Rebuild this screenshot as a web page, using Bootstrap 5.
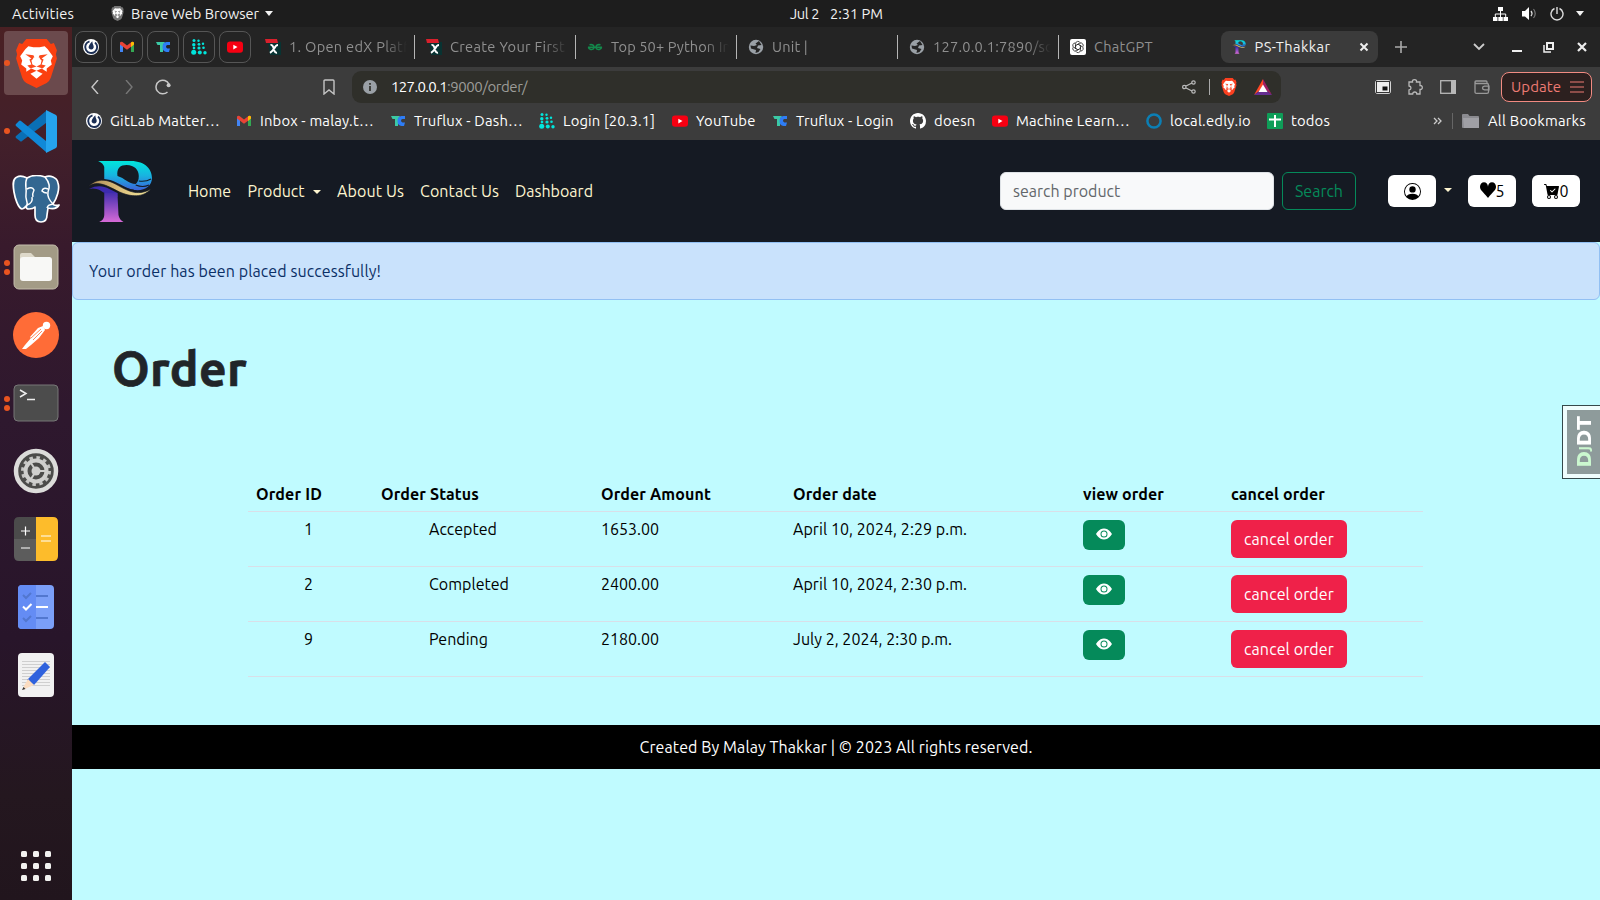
<!DOCTYPE html>
<html lang="en">
<head>
<meta charset="utf-8">
<title>PS-Thakkar</title>
<link href="https://cdn.jsdelivr.net/npm/bootstrap@5.3.0/dist/css/bootstrap.min.css" rel="stylesheet">
<style>
:root{--ui:Ubuntu,"Noto Sans","Open Sans",sans-serif}
html,body{height:900px;overflow:hidden}
body{font-family:var(--ui);background:#1d1d1d;color:#fff;font-size:16px}
svg{display:block;flex:none}
[data-w]{display:inline-block;white-space:nowrap}
.gbar{height:27px;font-size:14.6px;line-height:27px;color:#f2f2f2;display:grid;grid-template-columns:790px 1fr auto;background:#1d1d1d}
.gbar .caret{border-width:5px 5px 0}
.dock{width:72px;background:linear-gradient(180deg,#4a2023 0%,#43202a 12%,#381a2c 25%,#2e182e 45%,#28152a 70%,#24171f 88%,#21151d 100%)}
.dslot{height:68px;width:72px;position:relative;display:flex;align-items:center;justify-content:center}
.tile{width:64px;height:64px;border-radius:4px;background:#6b4a4d;display:flex;align-items:center;justify-content:center}
.dots{position:absolute;left:4px;top:0;height:68px;display:flex;flex-direction:column;justify-content:center;gap:3px}
.dots i{width:6px;height:6px;border-radius:50%;background:#e95420}
.tabs{height:40px;background:#242424;padding:4px 0 4px 3px;color:#8f8f8f;font-size:14.6px}
.pin{width:32px;height:32px;border:1px solid #565656;border-radius:8px;margin-right:4px;display:flex;align-items:center;justify-content:center}
.tabx{width:161px;height:32px;padding-left:12px;position:relative}
.tabx.sep{border-right:1px solid transparent}
.tabx.sep::after{content:"";position:absolute;right:-2px;top:4px;height:24px;width:1px;background:#b5b5b5}
.tabx svg{margin-right:8px}
.fadeout{width:122px;overflow:hidden;-webkit-mask-image:linear-gradient(90deg,#000 94px,transparent 118px)}
.tabon{width:157px;height:32px;border-radius:8px;background:#3b3b3b;color:#f1f1f1;padding-left:11px;margin-left:1.5px}
.tools{height:40px;background:#3c3c3c;color:#fff;font-size:15px}
.omni{width:929px;height:32px;border-radius:9px;background:#2f2f2a}
.marks{height:33px;background:#3c3c3c;font-size:14.8px;padding-left:14px;padding-bottom:5px}
.bm{gap:8px;flex:none}
.upd{width:91px;height:30px;border:1px solid #f28b82;border-radius:8px;background:#2c201f;color:#ee7b74;padding-left:9px;gap:9px}
.page{background:#c0fbff;color:#000;height:760px;position:relative;overflow:hidden}
.shop{height:102px;background:#151a23;padding:0 20px 0 16px}
.shop .nav-link{color:#fdf5d0;padding:0;line-height:24px}
.caret{display:inline-block;border-top:4.5px solid;border-left:4.5px solid transparent!important;border-right:4.5px solid transparent!important}
.shop .form-control{width:274px;height:38px;background:#f8f9fa;border-color:#dee2e6;font-family:var(--ui)}
.shop .form-control::placeholder{color:#62666a}
.btn-outline-success{--bs-btn-color:#058a5a;--bs-btn-border-color:#058a5a}
.white{width:48px;height:32px;border-radius:6px;background:#fff;color:#000}
.note{height:58px;background:#c9e2fc;border:1px solid #92c0f3;color:#0b3067;border-radius:6px;margin:0;padding:16px}
h1.ttl{font-size:48px;font-weight:700;line-height:58px;color:#212529;margin:39px 0 0 40px;-webkit-text-stroke:.7px #212529}
.otable{width:1175px;margin:73px 0 0 176px;table-layout:fixed;--bs-table-bg:transparent;--bs-table-color:#000}
.otable td,.otable th{height:41px;line-height:18px;padding:8px;border-color:#d9dfe8}
.otable th{vertical-align:bottom}
.otable td.ind{padding-left:56px}
.vbtn{width:42px;height:30px;background:#058a5a;border-radius:6px;display:flex;align-items:center;justify-content:center;padding-bottom:1px}
.cbtn,.cbtn:hover{width:116px;height:38px;background:#ef2149;color:#fff;border:0;border-radius:6px;padding:0;line-height:38px}
.foot{height:44px;background:#000;color:#fff;line-height:44px;margin-top:48px;text-align:center}
.djdt{position:absolute;right:-1px;top:265px;width:39px;height:74px;border:1px solid #35494b;background:#effdfd;padding:4px 0 4px 4px}
.djdt div{height:64px;background:#8e9b9b;display:flex;align-items:center;justify-content:center;font:700 20px/20px "DejaVu Sans",sans-serif;color:#fff}
.djdt span{writing-mode:vertical-rl;transform:rotate(180deg);white-space:nowrap;margin-right:-1px}
.djdt b{color:#cbf7cf}.djdt small{font:700 14px/20px "Open Sans",sans-serif;color:#cbf7cf;margin:0 1px}
</style>
</head>
<body>
<svg width="0" height="0" style="position:absolute">
<defs>
<linearGradient id="gp" x1="0" x2="0" y1="0" y2="1"><stop offset="0" stop-color="#00e6dc"/><stop offset=".5" stop-color="#18b4e0"/><stop offset="1" stop-color="#3b62d8"/></linearGradient>
<linearGradient id="gs" x1="0" x2="0" y1="0" y2="1"><stop offset="0" stop-color="#4630b0"/><stop offset="1" stop-color="#d66ad6"/></linearGradient>
<linearGradient id="gg" x1="0" x2="1"><stop offset="0" stop-color="#a68652"/><stop offset=".5" stop-color="#dcc07c"/><stop offset="1" stop-color="#f3e79c"/></linearGradient>
<symbol id="lion" viewBox="0 0 40 48">
<path fill="currentColor" d="M10 0h20l4 5 3-1 3 7-1 4 1 4-6 19q-1 3-4 5l-10 5-10-5q-3-2-4-5L0 19l1-4-1-4 3-7 3 1z"/>
<path fill="#fff" d="M12 7l5 1h6l5-1 3 3 5 7-2 4 1 4-5 4v3l-5-3-5 2-5-2-5 3v-3l-5-4 1-4-2-4 5-7zM20 31l6 3-6 5-6-5z"/>
<path fill="currentColor" d="M9 15l8 1 1 2-3 3 1 4 4 2 4-2 1-4-3-3 1-2 8-1-6 4 2 1-2 5 4 1-3 3-6-2-6 2-3-3 4-1-2-5 2-1z" opacity=".95"/>
<path fill="#fff" d="M17 18h6l1 6-4 2-4-2z"/>
</symbol>
<symbol id="plogo" viewBox="0 0 64 61">
<path fill="url(#gp)" fill-rule="evenodd" d="M10 0H42C57 0 63 9 63 17c0 8-7 13-17 12-8-1-15-7-24-10l-6-1V6Q15 2 10 0zM29 15c-1-8 3-11 9-11 8 0 12 5 12 11 0 4-1 6-3 8-7 0-11-6-18-8z"/>
<path fill="none" stroke="#151a23" stroke-width="1" d="M62 18q-5 3-12 2M60 24q-6 3-13 0M18 22c8-1 18 7 27 7"/>
<path fill="url(#gg)" stroke="#151a23" stroke-width=".7" d="M0 26c8-9 18-8 27-3 11 6 21 13 35 5-8 9-20 8-31 3C21 26 9 18 0 26z"/>
<path fill="#3d2bb0" d="M1 28c8-4 14-3 20 0l8 4v4H18v-3C13 30 8 26 1 28z"/>
<path fill="url(#gs)" d="M16 32h13l1 22q1 5 5 7H11q5-2 5-7z"/>
</symbol>
<symbol id="mat" viewBox="0 0 16 16"><circle cx="8" cy="8" r="8" fill="#fff"/><path d="M6.500 2.300A6 6 0 1 0 12 3.400" fill="none" stroke="#1c2f55" stroke-width="1.900"/><path d="M9.300 2.200C6.500 5 5.200 7.500 5.700 9a2.700 2.700 0 0 0 5-.6C11 6.500 9.400 5 9.300 2.200z" fill="#1c2f55"/></symbol>
<symbol id="gm" viewBox="0 0 16 16"><path d="M1 3.500v9.500h3V5z" fill="#4285f4"/><path d="M12 5v8h3V3.500z" fill="#34a853"/><path d="M1 5.500V3.700Q2 2 3.500 3L8 6.500 12.500 3Q14 2 15 3.700v1.800L8 10.800z" fill="#ea4335"/><path d="M12 3.400q2-1.600 3 .4v1.700l-3 2.400z" fill="#fbbc04"/></symbol>
<symbol id="tc" viewBox="0 0 16 16"><path d="M1 3h9l-2 3v7H5V6H2.500z" fill="#3bc9a5"/><path d="M15 3v3h-2.500Q11 6 11 7.500T12.500 9.600H15L14 13h-2.500Q7.500 12.500 7.500 8T11.500 3z" fill="#2e7df6"/></symbol>
<symbol id="dt" viewBox="0 0 16 16"><g fill="#00e5dc"><circle cx="3" cy="1.500" r="1.500"/><circle cx="7.500" cy="1.800" r="1.200"/><circle cx="2.800" cy="5.700" r="1.700"/><circle cx="8" cy="5.300" r="1.400"/><circle cx="12" cy="4.700" r="1.200"/><circle cx="3" cy="9" r="1.300"/><circle cx="8" cy="9" r="1.600"/><circle cx="12.500" cy="8.800" r="1.300"/><circle cx="2.700" cy="13.300" r="2.500"/><circle cx="8.800" cy="13.400" r="2"/><circle cx="14" cy="13.700" r="1.700"/></g></symbol>
<symbol id="yt" viewBox="0 0 16 16"><rect y="2.400" width="16" height="11.400" rx="3" fill="#f70012"/><path d="M6.300 5.700v4.800L10.500 8z" fill="#fff"/></symbol>
<symbol id="tx" viewBox="0 0 16 16"><path fill="#083332" d="M3 3h13v13H5z"/><path fill="#d9202c" d="M0 0h12l1 4H1z"/><path d="M5.500 6q2-.5 2.700 2l1.300 4q.6 2 2.500 1.700M13 6Q11 6 9.500 9T5 13.800" fill="none" stroke="#fff" stroke-width="2"/></symbol>
<symbol id="gfg" viewBox="0 0 16 16"><path d="M1 8.300h14M2.500 5.800q4.500-.8 4.500 2.500-.5 2.700-3.300 2.100Q1.500 9.800 1.500 8.300M13.500 5.800Q9 5 9 8.300q.5 2.700 3.300 2.100 2.200-.6 2.200-2.100" fill="none" stroke="#13894b" stroke-width="1.600"/></symbol>
<symbol id="globe" viewBox="0 0 16 16"><circle cx="8" cy="8" r="7.200" fill="#9aa0a6"/><path d="M2.500 6.500l3.500.5 3-1-1.500-1.500L11 2l2.500 4-3.500.5-1 2.500 3.500 1-2 3-3 1 .5-3L3 9.500z" fill="#242424"/></symbol>
<symbol id="gh" viewBox="0 0 16 16"><path fill="#fff" d="M8 0C3.580 0 0 3.580 0 8c0 3.540 2.290 6.530 5.470 7.590.4.070.55-.17.55-.38 0-.19-.01-.82-.01-1.490-2.010.37-2.530-.49-2.690-.94-.09-.23-.48-.94-.82-1.130-.28-.15-.68-.52-.01-.53.63-.01 1.080.58 1.230.82.72 1.210 1.870.87 2.330.66.07-.52.28-.87.51-1.070-1.780-.2-3.640-.89-3.640-3.950 0-.87.31-1.590.82-2.150-.08-.2-.36-1.020.08-2.120 0 0 .67-.21 2.200.82.64-.18 1.320-.27 2-.27s1.360.09 2 .27c1.530-1.040 2.200-.82 2.200-.82.44 1.100.16 1.920.08 2.120.51.56.82 1.270.82 2.150 0 3.070-1.870 3.750-3.650 3.950.29.25.54.73.54 1.480 0 1.070-.01 1.930-.01 2.200 0 .21.15.46.55.38A8.010 8.010 0 0 0 16 8c0-4.420-3.580-8-8-8"/></symbol>
<symbol id="eye" viewBox="0 0 16 16"><path fill="#fff" d="M10.500 8a2.500 2.500 0 1 1-5 0 2.500 2.500 0 0 1 5 0"/><path fill="#fff" d="M0 8s3-5.500 8-5.500S16 8 16 8s-3 5.500-8 5.500S0 8 0 8m8 3.500a3.500 3.500 0 1 0 0-7 3.500 3.500 0 0 0 0 7"/></symbol>
</defs>
</svg>

<div class="gbar">
  <div class="d-flex align-items-center" style="padding-left:12px">
    <span data-w="62">Activities</span>
    <svg width="13" height="15" viewBox="0 0 40 48" style="margin-left:37px;margin-right:7px;color:#777"><use href="#lion"/></svg>
    <span data-w="128">Brave Web Browser</span><span class="caret" style="margin-left:6px"></span>
  </div>
  <div><span data-w="29">Jul 2</span><span data-w="53" style="margin-left:11px">2:31 PM</span></div>
  <div class="d-flex align-items-center" style="padding-right:16px;gap:14px">
    <svg width="15" height="14" viewBox="0 0 15 14"><path fill="#fff" d="M5 0h5v4H5zM0 10h4.500v4H0zM5.300 10h4.500v4H5.300zM10.500 10H15v4h-4.500z"/><path d="M7.500 4v3M2.300 10V7h10.400v3M7.500 7v3" stroke="#fff" fill="none"/></svg>
    <svg width="14" height="14" viewBox="0 0 14 14"><path fill="#fff" d="M0 4h3l4-4v13L3 9.500H0z"/><path d="M9 4q2 2.500 0 5" stroke="#ddd" fill="none" stroke-width="1.300"/><path d="M11.500 2q3.500 4.500 0 9" stroke="#777" fill="none" stroke-width="1.200"/></svg>
    <svg width="14" height="14" viewBox="0 0 14 14"><path d="M4.500 1.500a6 6 0 1 0 5 0M7 0v7" stroke="#ddd" fill="none" stroke-width="1.400"/></svg>
    <span class="caret" style="margin-left:-2px"></span>
  </div>
</div>

<div class="d-flex" style="height:873px">
<aside class="dock d-flex flex-column" style="padding-top:2px">
  <div class="dslot"><div class="tile"><svg width="41" height="49" color="#fb4010"><use href="#lion"/></svg></div><div class="dots"><i></i></div></div>
  <div class="dslot"><div class="dots"><i></i></div><svg width="43" height="43" viewBox="0 0 43 43"><path fill="#0a6fb5" d="M31 1v12L7 31q-1 1-2 0l-4-3q-1-1 0-2z"/><path fill="#1089d8" d="M6 11l25 20v11L1 16q-1-1 0-2l3-3q1-1 2 0z"/><path fill="#25a4ee" d="M31 0l10 5q1 1 1 2v29q0 1-1 2l-10 5z"/></svg></div>
  <div class="dslot"><svg width="48" height="49" viewBox="0 0 48 49"><path fill="#336791" stroke="#fff" stroke-width="1.700" stroke-linejoin="round" d="M15 3Q9 0 5 2c-5 2-4 9-3 15 1 6 4 16 8 17 2 0 3-2 5-4-2 3 0 4 2 4 3 0 5-1 6-2v8c0 5 2 7 6 7 4 0 6-3 6-7l1-7c4 1 9 1 11-3-3 1-6 0-6-1 4-6 7-15 5-21C45 2 38 0 33 2 27 0 20 0 15 3z"/><path fill="none" stroke="#fff" stroke-width="1.500" d="M15 3c-3 6 0 10-1 16-1 6 2 7 1 11m0 0c3-1 6-3 5-8M15 14q5-3 7 1-2 4-1 7M33 2c5 6 5 11 3 15-1 5 1 8 5 12-4 1-5 1-6 4M36 14q-5-2-6 2 2 2 5 2"/></svg></div>
  <div class="dslot"><div class="dots"><i></i><i></i></div><svg width="46" height="46" viewBox="0 0 46 46"><rect x="1" y="1" width="44" height="44" rx="5" fill="#a39b86" stroke="#c4bdac"/><path d="M7 13V11q0-2 2-2h9l4 4h15v8H7z" fill="#ded9ca"/><rect x="7" y="13" width="32" height="24" rx="3" fill="#f8f8f6"/></svg></div>
  <div class="dslot"><svg width="46" height="46" viewBox="0 0 46 46"><circle cx="23" cy="23" r="23" fill="#ff6c37"/><circle cx="33.500" cy="13.500" r="3.700" fill="#fff"/><path fill="#fff" d="M30 14l2 4-6 8-8 7-5 4H9l3-4 6-7-1-1 8-9z"/><path d="M18 26l10-9M20 28l9-9" stroke="#ff6c37" stroke-width=".8"/></svg></div>
  <div class="dslot"><div class="dots"><i></i><i></i></div><svg width="46" height="38" viewBox="0 0 46 38"><rect x="1" y="1" width="44" height="36" rx="4" fill="#4c4c4c" stroke="#777"/><path d="M7 6l6 3.500L7 13M14 15.500h8" fill="none" stroke="#eee" stroke-width="1.500"/></svg></div>
  <div class="dslot"><svg width="46" height="46" viewBox="0 0 46 46"><circle cx="23" cy="23" r="20" fill="#4c4c4a" stroke="#dcdcda" stroke-width="4.500"/><circle cx="23" cy="23" r="13.500" fill="none" stroke="#c6c6c4" stroke-width="3" stroke-dasharray="3.500 3.570"/><circle cx="23" cy="23" r="10.500" fill="none" stroke="#cfcfcd" stroke-width="4"/><circle cx="23" cy="23" r="4.500" fill="#cfcfcd"/><path d="M23 23h9M23 23l-5-8M23 23l-5 8" stroke="#cfcfcd" stroke-width="2"/></svg></div>
  <div class="dslot"><svg width="46" height="46" viewBox="0 0 46 46"><path d="M6 1h17v22H1V6q0-5 5-5z" fill="#4b4b4b"/><path d="M1 23h22v22H6q-5 0-5-5z" fill="#5c5c5c"/><path d="M23 1h17q5 0 5 5v34q0 5-5 5H23z" fill="#fdbc2b"/><path d="M12.500 10.500v9M8 15h9M8 32h9M28 20h10M28 25h10" stroke="#fff" stroke-width="1.200"/></svg></div>
  <div class="dslot"><svg width="36" height="46" viewBox="0 0 36 46"><rect y="1" width="36" height="44" rx="4" fill="#7b9ff8"/><path d="M4 1h14v44H4q-4 0-4-4V5q0-4 4-4z" fill="#648cf4"/><path d="M5 11l3 3 5-5M18 12h12M5 34l3 3 5-5M18 34h12" fill="none" stroke="#5277cf" stroke-width="2"/><path d="M5 22.500l3 3 5.500-5.500M18 23h12" fill="none" stroke="#fff" stroke-width="2"/></svg></div>
  <div class="dslot"><svg width="36" height="46" viewBox="0 0 36 46"><rect y="1" width="36" height="44" rx="4" fill="#f1f1f1"/><path d="M4 9.500h28M4 12.500h28M4 15.500h28M4 18.500h28M4 21.500h28M4 24.500h28M4 27.500h28M4 30.500h28M4 33.500h28" stroke="#cfcfcf"/><path d="M27 10l5 5-16 18-7-5z" fill="#2f62dd"/><path d="M10 27l6 6-7 3-4 2 1-4z" fill="#fbdcc0"/><path d="M4 38l1.500-3 2 2z" fill="#333"/></svg></div>
  <div class="mt-auto" style="padding:0 0 19px 21px"><svg width="30" height="30" viewBox="0 0 30 30" fill="#f2f2f0"><g id="r3"><rect width="6" height="6" rx="1.500"/><rect x="12" width="6" height="6" rx="1.500"/><rect x="24" width="6" height="6" rx="1.500"/></g><use href="#r3" y="12"/><use href="#r3" y="24"/></svg></div>
</aside>

<main class="flex-grow-1">
  <div class="tabs d-flex">
    <div class="pin"><svg width="16" height="16"><use href="#mat"/></svg></div>
    <div class="pin"><svg width="16" height="16"><use href="#gm"/></svg></div>
    <div class="pin"><svg width="16" height="16"><use href="#tc"/></svg></div>
    <div class="pin"><svg width="16" height="16"><use href="#dt"/></svg></div>
    <div class="pin" style="margin-right:2px"><svg width="16" height="16"><use href="#yt"/></svg></div>
    <div class="tabx sep d-flex align-items-center"><svg width="16" height="16"><use href="#tx"/></svg><div class="fadeout"><span data-w="120">1. Open edX Platf</span></div></div>
    <div class="tabx sep d-flex align-items-center"><svg width="16" height="16"><use href="#tx"/></svg><div class="fadeout"><span data-w="115">Create Your First</span></div></div>
    <div class="tabx sep d-flex align-items-center"><svg width="16" height="16"><use href="#gfg"/></svg><div class="fadeout"><span data-w="120">Top 50+ Python In</span></div></div>
    <div class="tabx sep d-flex align-items-center"><svg width="16" height="16"><use href="#globe"/></svg><div class="fadeout"><span data-w="36">Unit |</span></div></div>
    <div class="tabx sep d-flex align-items-center"><svg width="16" height="16"><use href="#globe"/></svg><div class="fadeout"><span data-w="119">127.0.0.1:7890/sc</span></div></div>
    <div class="tabx d-flex align-items-center"><svg width="16" height="16" viewBox="0 0 16 16"><rect width="16" height="16" rx="2" fill="#fff"/><g fill="none" stroke="#222" stroke-width=".75"><g id="pt"><path d="M5.600 8V4.600a2.400 2.400 0 0 1 4.600-.8M8 5.200l3 1.700"/></g><use href="#pt" transform="rotate(60 8 8)"/><use href="#pt" transform="rotate(120 8 8)"/><use href="#pt" transform="rotate(180 8 8)"/><use href="#pt" transform="rotate(240 8 8)"/><use href="#pt" transform="rotate(300 8 8)"/></g></svg><span data-w="59">ChatGPT</span></div>
    <div class="tabon d-flex align-items-center"><svg width="14" height="14" style="margin-right:9px"><use href="#plogo"/></svg><span data-w="76">PS-Thakkar</span><svg class="ms-auto me-2" width="12" height="12" viewBox="0 0 12 12"><path d="M2.500 2.500l7 7M9.500 2.500l-7 7" stroke="#eee" stroke-width="2"/></svg></div>
    <div class="d-flex align-items-center flex-grow-1">
      <svg width="12" height="12" viewBox="0 0 12 12" style="margin-left:17px"><path d="M6 0v12M0 6h12" stroke="#aaa" stroke-width="1.600"/></svg>
      <svg width="12" height="8" viewBox="0 0 12 8" style="margin-left:66px"><path d="M1 1l5 5 5-5" fill="none" stroke="#ccc" stroke-width="1.800"/></svg>
      <svg width="10" height="12" viewBox="0 0 10 12" style="margin-left:27px"><path d="M0 10h10" stroke="#eee" stroke-width="2"/></svg>
      <svg width="11" height="11" viewBox="0 0 11 11" style="margin-left:21px"><path d="M4 1h6v6H4z" fill="none" stroke="#eee" stroke-width="2"/><path d="M1 3v7h7" fill="none" stroke="#eee" stroke-width="1.500"/></svg>
      <svg width="10" height="10" viewBox="0 0 10 10" style="margin-left:23px"><path d="M1 1l8 8M9 1L1 9" stroke="#eee" stroke-width="2.200"/></svg>
    </div>
  </div>
  <div class="tools d-flex align-items-center">
    <svg width="8" height="14" viewBox="0 0 8 14" style="margin-left:19px"><path d="M7 0L1 7l6 7" fill="none" stroke="#c8c8c8" stroke-width="1.400"/></svg>
    <svg width="8" height="14" viewBox="0 0 8 14" style="margin-left:26px"><path d="M1 0l6 7-6 7" fill="none" stroke="#777" stroke-width="1.400"/></svg>
    <svg width="16" height="16" viewBox="0 0 16 16" style="margin-left:22px"><path d="M12.500 13A6.800 6.800 0 1 1 14 5.200" fill="none" stroke="#c8c8c8" stroke-width="1.500"/><circle cx="13.600" cy="6.300" r="2" fill="#c8c8c8"/></svg>
    <svg width="12" height="16" viewBox="0 0 12 16" style="margin-left:152px;margin-right:17px"><path d="M2 1h8q1 0 1 1v13l-5-4-5 4V2q0-1 1-1z" fill="none" stroke="#c4c4c4" stroke-width="1.400"/></svg>
    <div class="omni d-flex align-items-center">
      <svg width="14" height="14" viewBox="0 0 14 14" style="margin:0 14px 0 11px"><circle cx="7" cy="7" r="7" fill="#9aa0a6"/><path d="M7 6v5M7 3v1.800" stroke="#2f2f2a" stroke-width="1.700"/></svg>
      <span data-w="56">127.0.0.1</span><span data-w="80" style="color:#9c9c98">:9000/order/</span>
      <svg class="ms-auto" width="14" height="14" viewBox="0 0 14 14" fill="none" stroke="#bbb" stroke-width="1.200"><circle cx="2.300" cy="7" r="1.700"/><circle cx="11.500" cy="2.500" r="1.700"/><circle cx="11.500" cy="11.500" r="1.700"/><path d="M4 6l6-3M4 8l6 3"/></svg>
      <span style="width:1px;height:16px;background:#aaa;margin:0 11px 0 13px"></span>
      <svg width="16" height="18" color="#fb4020"><use href="#lion"/></svg>
      <svg width="18" height="16" viewBox="0 0 18 16" style="margin:0 9px 0 17px"><path d="M9 0L0 16l9-7z" fill="#ff4724"/><path d="M9 0l9 16-9-7z" fill="#9e1f63"/><path d="M0 16h18l-9-7z" fill="#662d91"/><path d="M9 5.500l4.500 7.500h-9z" fill="#fff"/></svg>
    </div>
    <svg width="16" height="14" viewBox="0 0 16 14" style="margin-left:94px"><rect x=".7" y=".7" width="14.600" height="12.600" rx="1.500" fill="#eee" stroke="#eee"/><rect x="1.500" y="1.500" width="13" height="11" fill="none" stroke="#222" stroke-width=".9"/><rect x="7.500" y="6.500" width="5" height="4" fill="#111"/></svg>
    <svg width="16" height="16" viewBox="0 0 16 16" style="margin-left:16px"><path d="M2 3h3.500Q5 .7 7.500.7T9.500 3H13v3.500q2.300-.2 2.300 2T13 10.500V15H9.800q0-2-2-2t-2.100 2H2v-4q2-.2 2-2T2 7z" fill="none" stroke="#b8b8b8" stroke-width="1.300"/></svg>
    <svg width="16" height="14" viewBox="0 0 16 14" style="margin-left:17px"><rect x=".7" y=".7" width="14.600" height="12.600" fill="none" stroke="#b8b8b8" stroke-width="1.300"/><path d="M11 0h5v14h-5z" fill="#b8b8b8"/></svg>
    <svg width="16" height="14" viewBox="0 0 16 14" style="margin:0 11px 0 18px"><path d="M13 3V2q0-1-1-1H2Q1 1 1 2t1 1.500h11q1.500 0 1.500 1.500v7q0 1.300-1.500 1.300H2.500Q1 13.300 1 12V2M15 6.200h-4.500Q8.500 6.500 8.500 8t2 1.800H15z" fill="none" stroke="#999" stroke-width="1.300"/></svg>
    <div class="upd d-flex align-items-center"><span data-w="50">Update</span><svg width="14" height="12" viewBox="0 0 14 12"><path d="M0 1h14M0 6h14M0 11h14" stroke="#ee7b74" stroke-width="1.200"/></svg></div>
  </div>
  <div class="marks d-flex align-items-center">
    <div class="bm d-flex align-items-center" style="width:150px"><svg width="16" height="16"><use href="#mat"/></svg><span data-w="110">GitLab Matter…</span></div>
    <div class="bm d-flex align-items-center" style="width:154px"><svg width="16" height="16"><use href="#gm"/></svg><span data-w="114">Inbox - malay.t…</span></div>
    <div class="bm d-flex align-items-center" style="width:149px"><svg width="16" height="16"><use href="#tc"/></svg><span data-w="109">Truflux - Dash…</span></div>
    <div class="bm d-flex align-items-center" style="width:133px"><svg width="16" height="16"><use href="#dt"/></svg><span data-w="92">Login [20.3.1]</span></div>
    <div class="bm d-flex align-items-center" style="width:100px"><svg width="16" height="16"><use href="#yt"/></svg><span data-w="59.500">YouTube</span></div>
    <div class="bm d-flex align-items-center" style="width:138px"><svg width="16" height="16"><use href="#tc"/></svg><span data-w="97.500">Truflux - Login</span></div>
    <div class="bm d-flex align-items-center" style="width:82px"><svg width="16" height="16"><use href="#gh"/></svg><span data-w="41.500">doesn</span></div>
    <div class="bm d-flex align-items-center" style="width:154px"><svg width="16" height="16"><use href="#yt"/></svg><span data-w="114">Machine Learn…</span></div>
    <div class="bm d-flex align-items-center" style="width:121px"><svg width="16" height="16" viewBox="0 0 16 16"><circle cx="8" cy="8" r="6.600" fill="none" stroke="#0b7fb5" stroke-width="2.500"/></svg><span data-w="81">local.edly.io</span></div>
    <div class="bm d-flex align-items-center"><svg width="16" height="16" viewBox="0 0 16 16"><rect width="16" height="16" rx="1" fill="#0f9d58"/><path d="M8 2v12M2 6.500h12" stroke="#fff" stroke-width="2"/></svg><span data-w="39">todos</span></div>
    <svg width="9" height="8" viewBox="0 0 9 8" style="margin-left:103px"><path d="M1 1l3 3-3 3M5 1l3 3-3 3" fill="none" stroke="#ccc" stroke-width="1.300"/></svg>
    <span style="width:1px;height:16px;background:#666;margin:0 9px 0 10px"></span>
    <svg width="18" height="15" viewBox="0 0 18 15"><path d="M0 1q0-1 1-1h5l1.500 2H16q1 0 1 1v11H1q-1 0-1-1z" fill="#8b8b90"/><path d="M1 4h16v10H2z" fill="#a0a0a5"/></svg>
    <span data-w="98" style="margin-left:8px">All Bookmarks</span>
  </div>

  <div class="page">
    <nav class="shop d-flex align-items-center">
      <svg width="65" height="61" viewBox="0 0 64 61" preserveAspectRatio="none" style="margin-right:35px"><use href="#plogo" width="64" height="61"/></svg>
      <a class="nav-link" style="width:59.5px"><span data-w="43">Home</span></a>
      <a class="nav-link" style="width:89.5px"><span data-w="57">Product</span><span class="caret" style="margin-left:8px;vertical-align:3px;border-top-width:4px"></span></a>
      <a class="nav-link" style="width:83px"><span data-w="67">About Us</span></a>
      <a class="nav-link" style="width:95px"><span data-w="79">Contact Us</span></a>
      <a class="nav-link"><span data-w="78">Dashboard</span></a>
      <form class="d-flex ms-auto gap-2"><input class="form-control" placeholder="search product"><button class="btn btn-outline-success px-0" type="button" style="width:74px"><span data-w="48">Search</span></button></form>
      <div class="white d-flex align-items-center justify-content-center" style="margin-left:32px"><svg width="17" height="17" viewBox="0 0 16 16"><path d="M11 6a3 3 0 1 1-6 0 3 3 0 0 1 6 0"/><path fill-rule="evenodd" d="M0 8a8 8 0 1 1 16 0A8 8 0 0 1 0 8m8-7a7 7 0 0 0-5.468 11.370C3.242 11.226 4.805 10 8 10s4.757 1.225 5.468 2.370A7 7 0 0 0 8 1"/></svg></div>
      <span class="caret" style="margin:-2px 16px 0 8px;border-top-width:4px;color:#fdf5d0"></span>
      <div class="white d-flex align-items-center justify-content-center"><svg width="16" height="16" viewBox="0 .8 16 14.200" preserveAspectRatio="none" style="margin-top:-2px"><path d="M4 1c2.210 0 4 1.755 4 3.920C8 2.755 9.790 1 12 1s4 1.755 4 3.920c0 3.263-3.234 4.414-7.608 9.608a.513.513 0 0 1-.784 0C3.234 9.334 0 8.183 0 4.920 0 2.755 1.790 1 4 1"/></svg><span data-w="9">5</span></div>
      <div class="white d-flex align-items-center justify-content-center ms-3"><svg width="16" height="16" viewBox="0 0 16 16"><path d="M.5 1a.5.5 0 0 0 0 1h1.110l.401 1.607 1.498 7.985A.5.5 0 0 0 4 12h1a2 2 0 1 0 0 4 2 2 0 0 0 0-4h7a2 2 0 1 0 0 4 2 2 0 0 0 0-4h1a.5.5 0 0 0 .491-.408l1.500-8A.5.5 0 0 0 14.500 3H2.890l-.405-1.621A.5.5 0 0 0 2 1zM6 14a1 1 0 1 1-2 0 1 1 0 0 1 2 0m7 0a1 1 0 1 1-2 0 1 1 0 0 1 2 0m-1.646-7.646-3 3a.5.5 0 0 1-.708 0l-1.500-1.500a.5.5 0 1 1 .708-.708L8 8.293l2.646-2.647a.5.5 0 0 1 .708.708"/></svg><span data-w="9">0</span></div>
    </nav>
    <div class="alert note"><span data-w="292">Your order has been placed successfully!</span></div>
    <h1 class="ttl"><span data-w="135">Order</span></h1>
    <table class="table otable mb-0">
      <colgroup><col style="width:125px"><col style="width:220px"><col style="width:192px"><col style="width:290px"><col style="width:148px"><col style="width:200px"></colgroup>
      <thead><tr><th><span data-w="66">Order ID</span></th><th><span data-w="98">Order Status</span></th><th><span data-w="110">Order Amount</span></th><th><span data-w="84">Order date</span></th><th><span data-w="81">view order</span></th><th><span data-w="94">cancel order</span></th></tr></thead>
      <tbody>
      <tr><td class="ind">1</td><td class="ind"><span data-w="68">Accepted</span></td><td><span data-w="58">1653.00</span></td><td><span data-w="174">April 10, 2024, 2:29 p.m.</span></td><td><a class="vbtn"><svg width="16" height="16"><use href="#eye"/></svg></a></td><td><button class="btn cbtn d-block"><span data-w="90">cancel order</span></button></td></tr>
      <tr><td class="ind">2</td><td class="ind"><span data-w="80">Completed</span></td><td><span data-w="58">2400.00</span></td><td><span data-w="174">April 10, 2024, 2:30 p.m.</span></td><td><a class="vbtn"><svg width="16" height="16"><use href="#eye"/></svg></a></td><td><button class="btn cbtn d-block"><span data-w="90">cancel order</span></button></td></tr>
      <tr><td class="ind">9</td><td class="ind"><span data-w="59">Pending</span></td><td><span data-w="58">2180.00</span></td><td><span data-w="159">July 2, 2024, 2:30 p.m.</span></td><td><a class="vbtn"><svg width="16" height="16"><use href="#eye"/></svg></a></td><td><button class="btn cbtn d-block"><span data-w="90">cancel order</span></button></td></tr>
      </tbody>
    </table>
    <footer class="foot"><span data-w="393">Created By Malay Thakkar | © 2023 All rights reserved.</span></footer>
    <div class="djdt"><div><span><b>D</b><small>J</small>DT</span></div></div>
  </div>
</main>
</div>
<script src="https://cdn.jsdelivr.net/npm/bootstrap@5.3.0/dist/js/bootstrap.bundle.min.js"></script>
<script>
// Track each label so that it fills its own width.
document.querySelectorAll('[data-w]').forEach(function (el) {
  var n = el.textContent.length, w = el.getBoundingClientRect().width;
  el.style.letterSpacing = ((+el.dataset.w - w) / n).toFixed(3) + 'px';
});
</script>
</body>
</html>
